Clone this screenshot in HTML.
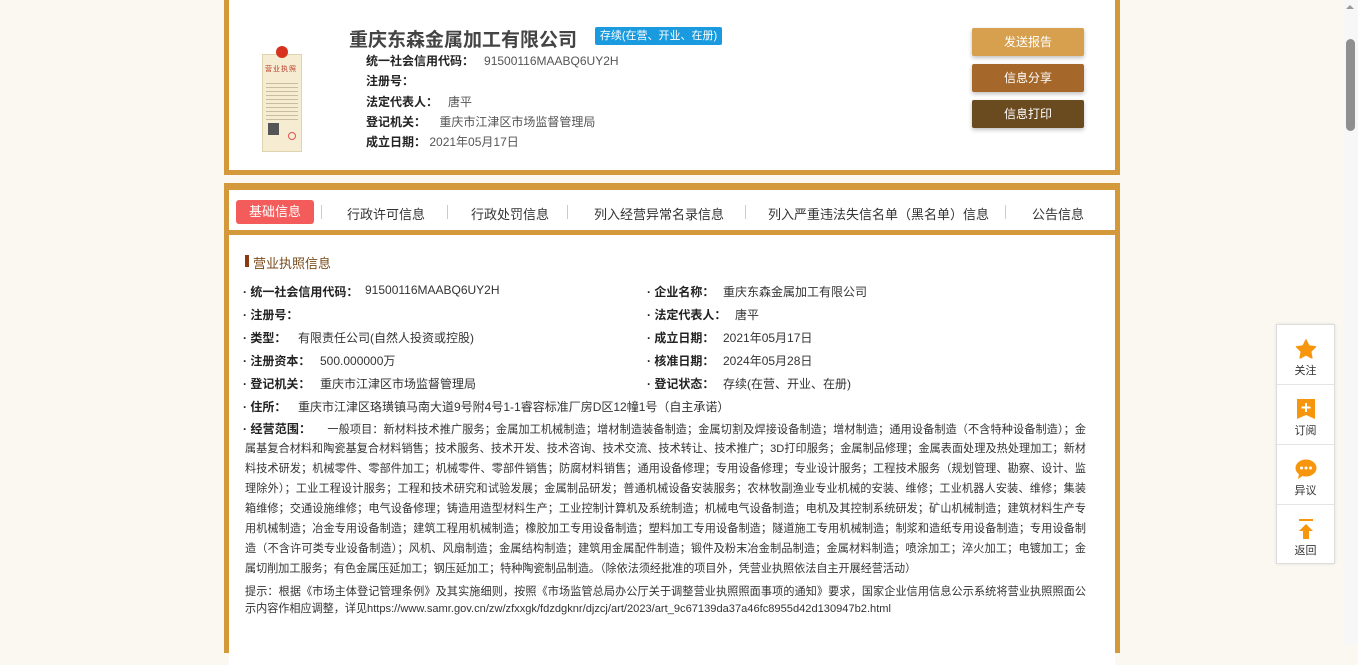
<!DOCTYPE html>
<html><head><meta charset="utf-8">
<style>
*{margin:0;padding:0;box-sizing:border-box}
body{width:1358px;height:644px;overflow:hidden;background:#fbf7f1;font-family:"Liberation Sans","Noto Sans CJK SC",sans-serif;font-size:12px;color:#333;position:relative}
.a{position:absolute;white-space:nowrap}
.card1{position:absolute;left:224px;top:-6px;width:896px;height:181px;border:5px solid #d4993a;background:#fff}
.card2{position:absolute;left:224px;top:183px;width:896px;height:470px;background:#d4993a}
.tabs{position:absolute;left:5px;top:7px;width:886px;height:40px;background:#fff}
.cont{position:absolute;left:5px;top:52px;width:886px;height:430px;background:#fff}
.b{font-weight:bold;color:#222}
.btn{position:absolute;left:972px;width:112px;height:28px;border-radius:2px;color:#fff;text-align:center;line-height:28px;font-size:12px;box-shadow:0 2px 4px rgba(0,0,0,.25)}
.sep{position:absolute;top:205px;width:1px;height:14px;background:#ccc}
.tab{position:absolute;top:204px;font-size:13px;color:#333;white-space:nowrap}
.ln{position:absolute;left:245px;width:841px;height:20px;line-height:20px;font-size:11.1px;text-align:justify;text-align-last:justify;white-space:nowrap;color:#333;overflow:hidden}
.side{position:absolute;left:1276px;top:324px;width:59px;height:240px;background:#fff;border:1px solid #ddd;box-shadow:0 0 3px rgba(0,0,0,.1)}
.si{height:60px;border-bottom:1px solid #e4e4e4;text-align:center;font-size:11px;color:#333;padding-top:14px}
.si:last-child{border-bottom:none}
</style></head><body>
<div class="card1"></div>
<div class="a" style="left:262px;top:54px;width:40px;height:98px;background:#f6ecd2;border:1px solid #e0d3b0"></div>
<div class="a" style="left:276px;top:46px;width:12px;height:12px;border-radius:50%;background:#d8321e"></div>
<div class="a" style="left:265px;top:64px;font-size:7px;color:#b5392a;letter-spacing:1px">营业执照</div>
<div class="a" style="left:266px;top:80px;width:32px;height:40px;background:repeating-linear-gradient(#f6ecd2 0 3px,#c9bda0 3px 4px)"></div>
<div class="a" style="left:268px;top:123px;width:11px;height:12px;background:#555"></div>
<div class="a" style="left:288px;top:132px;width:8px;height:8px;border-radius:50%;border:1px solid #d55"></div>

<div class="a" style="left:349px;top:25px;font-size:19px;font-weight:bold;color:#444">重庆东森金属加工有限公司</div>
<div class="a" style="left:595px;top:27px;width:127px;height:18px;background:#1a9be0;color:#fff;font-size:11px;line-height:18px;text-align:center;border-radius:2px;overflow:hidden">存续(在营、开业、在册)</div>
<div class="a" style="left:366px;top:52px"><span class="b">统一社会信用代码：</span>&nbsp;&nbsp; <span style="color:#555">91500116MAABQ6UY2H</span></div>
<div class="a b" style="left:366px;top:72px">注册号：</div>
<div class="a" style="left:366px;top:93px"><span class="b">法定代表人：</span>&nbsp;&nbsp; <span style="color:#555">唐平</span></div>
<div class="a" style="left:366px;top:113px"><span class="b">登记机关：</span>&nbsp;&nbsp;&nbsp; <span style="color:#555">重庆市江津区市场监督管理局</span></div>
<div class="a" style="left:366px;top:133px"><span class="b">成立日期：</span> <span style="color:#555">2021年05月17日</span></div>
<div class="btn" style="top:28px;background:#d6a04f">发送报告</div>
<div class="btn" style="top:64px;background:#a5682a">信息分享</div>
<div class="btn" style="top:100px;background:#6a4a1f">信息打印</div>

<div class="card2"><div class="tabs"></div><div class="cont"></div></div>
<div class="a" style="left:236px;top:200px;width:78px;height:24px;background:#f45c5c;border-radius:3px;color:#fff;font-size:13px;line-height:24px;text-align:center">基础信息</div>
<div class="sep" style="left:321px"></div>
<div class="tab" style="left:347px">行政许可信息</div>
<div class="sep" style="left:447px"></div>
<div class="tab" style="left:471px">行政处罚信息</div>
<div class="sep" style="left:567px"></div>
<div class="tab" style="left:594px">列入经营异常名录信息</div>
<div class="sep" style="left:745px"></div>
<div class="tab" style="left:768px">列入严重违法失信名单（黑名单）信息</div>
<div class="sep" style="left:1005px"></div>
<div class="tab" style="left:1032px">公告信息</div>

<div class="a" style="left:245px;top:255px;width:4px;height:12px;background:#8b3a10"></div>
<div class="a" style="left:253px;top:253px;font-size:13px;color:#7a4a1a">营业执照信息</div>

<div class="a" style="left:243px;top:283px"><span class="b">· 统一社会信用代码：</span></div><div class="a" style="left:365px;top:283px">91500116MAABQ6UY2H</div>
<div class="a" style="left:647px;top:283px"><span class="b">· 企业名称：</span></div><div class="a" style="left:723px;top:283px">重庆东森金属加工有限公司</div>
<div class="a" style="left:243px;top:306px"><span class="b">· 注册号：</span></div>
<div class="a" style="left:647px;top:306px"><span class="b">· 法定代表人：</span></div><div class="a" style="left:735px;top:306px">唐平</div>
<div class="a" style="left:243px;top:329px"><span class="b">· 类型：</span></div><div class="a" style="left:298px;top:329px">有限责任公司(自然人投资或控股)</div>
<div class="a" style="left:647px;top:329px"><span class="b">· 成立日期：</span></div><div class="a" style="left:723px;top:329px">2021年05月17日</div>
<div class="a" style="left:243px;top:352px"><span class="b">· 注册资本：</span></div><div class="a" style="left:320px;top:352px">500.000000万</div>
<div class="a" style="left:647px;top:352px"><span class="b">· 核准日期：</span></div><div class="a" style="left:723px;top:352px">2024年05月28日</div>
<div class="a" style="left:243px;top:375px"><span class="b">· 登记机关：</span></div><div class="a" style="left:320px;top:375px">重庆市江津区市场监督管理局</div>
<div class="a" style="left:647px;top:375px"><span class="b">· 登记状态：</span></div><div class="a" style="left:723px;top:375px">存续(在营、开业、在册)</div>
<div class="a" style="left:243px;top:398px"><span class="b">· 住所：</span></div><div class="a" style="left:298px;top:398px">重庆市江津区珞璜镇马南大道9号附4号1-1睿容标准厂房D区12幢1号（自主承诺）</div>

<div class="ln" style="left:243px;width:843px;top:419px"><b style="color:#222;font-size:12px">· 经营范围：</b>&nbsp;&nbsp;&nbsp;&nbsp;&nbsp;一般项目：新材料技术推广服务；金属加工机械制造；增材制造装备制造；金属切割及焊接设备制造；增材制造；通用设备制造（不含特种设备制造）；金</div>
<div class="ln" style="top:439px">属基复合材料和陶瓷基复合材料销售；技术服务、技术开发、技术咨询、技术交流、技术转让、技术推广；3D打印服务；金属制品修理；金属表面处理及热处理加工；新材</div>
<div class="ln" style="top:459px">料技术研发；机械零件、零部件加工；机械零件、零部件销售；防腐材料销售；通用设备修理；专用设备修理；专业设计服务；工程技术服务（规划管理、勘察、设计、监</div>
<div class="ln" style="top:479px">理除外）；工业工程设计服务；工程和技术研究和试验发展；金属制品研发；普通机械设备安装服务；农林牧副渔业专业机械的安装、维修；工业机器人安装、维修；集装</div>
<div class="ln" style="top:499px">箱维修；交通设施维修；电气设备修理；铸造用造型材料生产；工业控制计算机及系统制造；机械电气设备制造；电机及其控制系统研发；矿山机械制造；建筑材料生产专</div>
<div class="ln" style="top:519px">用机械制造；冶金专用设备制造；建筑工程用机械制造；橡胶加工专用设备制造；塑料加工专用设备制造；隧道施工专用机械制造；制浆和造纸专用设备制造；专用设备制</div>
<div class="ln" style="top:539px">造（不含许可类专业设备制造）；风机、风扇制造；金属结构制造；建筑用金属配件制造；锻件及粉末冶金制品制造；金属材料制造；喷涂加工；淬火加工；电镀加工；金</div>
<div class="ln" style="top:559px;width:669px">属切削加工服务；有色金属压延加工；钢压延加工；特种陶瓷制品制造。（除依法须经批准的项目外，凭营业执照依法自主开展经营活动）</div>
<div class="ln" style="top:582px">提示：根据《市场主体登记管理条例》及其实施细则，按照《市场监管总局办公厅关于调整营业执照照面事项的通知》要求，国家企业信用信息公示系统将营业执照照面公</div>
<div class="a" style="left:245px;top:599px;font-size:11.1px;line-height:20px">示内容作相应调整，详见https://www.samr.gov.cn/zw/zfxxgk/fdzdgknr/djzcj/art/2023/art_9c67139da37a46fc8955d42d130947b2.html</div>

<div class="side">
<div class="si"><svg width="22" height="20" viewBox="0 0 24 22"><path d="M12 1l3.2 6.6 7.3 1-5.3 5.1 1.3 7.2L12 17.5 5.5 20.9l1.3-7.2L1.5 8.6l7.3-1z" fill="#f7960c" stroke="#f7960c" stroke-linejoin="round" stroke-width="1.5"/></svg><div>关注</div></div>
<div class="si"><svg width="18" height="20" viewBox="0 0 18 20"><path d="M0 0h18v20l-9-4-9 4z" fill="#f7960c"/><path d="M9 4v9M4.5 8.5h9" stroke="#fff" stroke-width="2"/></svg><div>订阅</div></div>
<div class="si"><svg width="22" height="20" viewBox="0 0 22 20"><ellipse cx="11" cy="9" rx="10.5" ry="8.5" fill="#f7960c"/><path d="M4 15l-1 5 6-4z" fill="#f7960c"/><circle cx="6.5" cy="9" r="1.5" fill="#fff"/><circle cx="11" cy="9" r="1.5" fill="#fff"/><circle cx="15.5" cy="9" r="1.5" fill="#fff"/></svg><div>异议</div></div>
<div class="si"><svg width="18" height="20" viewBox="0 0 18 20"><path d="M2 1h14" stroke="#f7960c" stroke-width="2"/><path d="M9 5l7 7h-4v8H6v-8H2z" fill="#f7960c"/></svg><div>返回</div></div>
</div>

<div class="a" style="left:1343px;top:0;width:15px;height:644px;background:#f7f7f7"></div>
<div class="a" style="left:1346px;top:5px;width:0;height:0;border-left:4px solid transparent;border-right:4px solid transparent;border-bottom:4px solid #999"></div>
<div class="a" style="left:1346px;top:39px;width:9px;height:92px;border-radius:5px;background:#8f8f8f"></div>
</body></html>
